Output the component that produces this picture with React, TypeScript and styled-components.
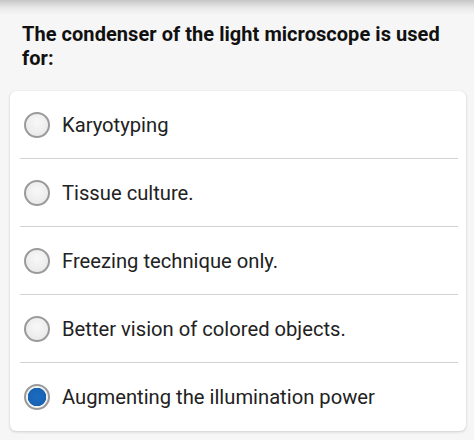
import React from "react";
import styled, {createGlobalStyle} from "styled-components";

const GlobalStyle = createGlobalStyle`
  html, body {
    margin: 0;
    padding: 0;
    background: #f6f6f6;
  }
  body {
    font-family: Roboto, "Liberation Sans", sans-serif;
  }
`;

const Page = styled.div`
  width: 474px;
  height: 440px;
  box-sizing: border-box;
  padding: 22px 8px 0 10px;
  background: linear-gradient(to bottom, #c6c6c6 0px, #e9e9e9 8px, #f6f6f6 15px, #f6f6f6 100%);
  overflow: hidden;
`;

const Question = styled.h2`
  margin: 0 0 21px 12px;
  font-size: 20px;
  line-height: 24px;
  font-weight: 700;
  color: #111;
  letter-spacing: 0.05px;
`;

const Card = styled.div`
  background: #fff;
  border-radius: 6px;
  box-shadow: 0 1px 3px rgba(0, 0, 0, 0.16), 0 0 1px rgba(0, 0, 0, 0.1);
  padding: 0 8px 0 10px;
  width: 456px;
  box-sizing: border-box;
`;

const Row = styled.label<{ $last?: boolean }>`
  display: flex;
  align-items: center;
  gap: 12px;
  height: 68px;
  box-sizing: border-box;
  padding-left: 4px;
  border-bottom: ${p => (p.$last ? "none" : "1.5px solid #d2d2d2")};
  font-size: 20.2px;
  color: #222;
`;

const Radio = styled.span<{ $checked?: boolean }>`
  width: 26px;
  height: 26px;
  box-sizing: border-box;
  border-radius: 50%;
  border: 2px solid #9a9a9a;
  flex-shrink: 0;
  background: ${p =>
    p.$checked
      ? "radial-gradient(circle, #1b6cc0 0, #1763b5 9px, #f2f2f2 9.5px, #f2f2f2 100%)"
      : "radial-gradient(circle at 50% 40%, #f8f8f8 0, #ebebeb 70%, #e2e2e2 100%)"};
`;

const options = [
  "Karyotyping",
  "Tissue culture.",
  "Freezing technique only.",
  "Better vision of colored objects.",
  "Augmenting the illumination power",
];

export default function App() {
  return (
    <Page>
      <GlobalStyle/>
      <Question>The condenser of the light microscope is used for:</Question>
      <Card>
        {options.map((opt, i) => (
          <Row key={`opt-${i}`} $last={i === options.length - 1}>
            <Radio $checked={i === options.length - 1}/>
            {opt}
          </Row>
        ))}
      </Card>
    </Page>
  );
}
